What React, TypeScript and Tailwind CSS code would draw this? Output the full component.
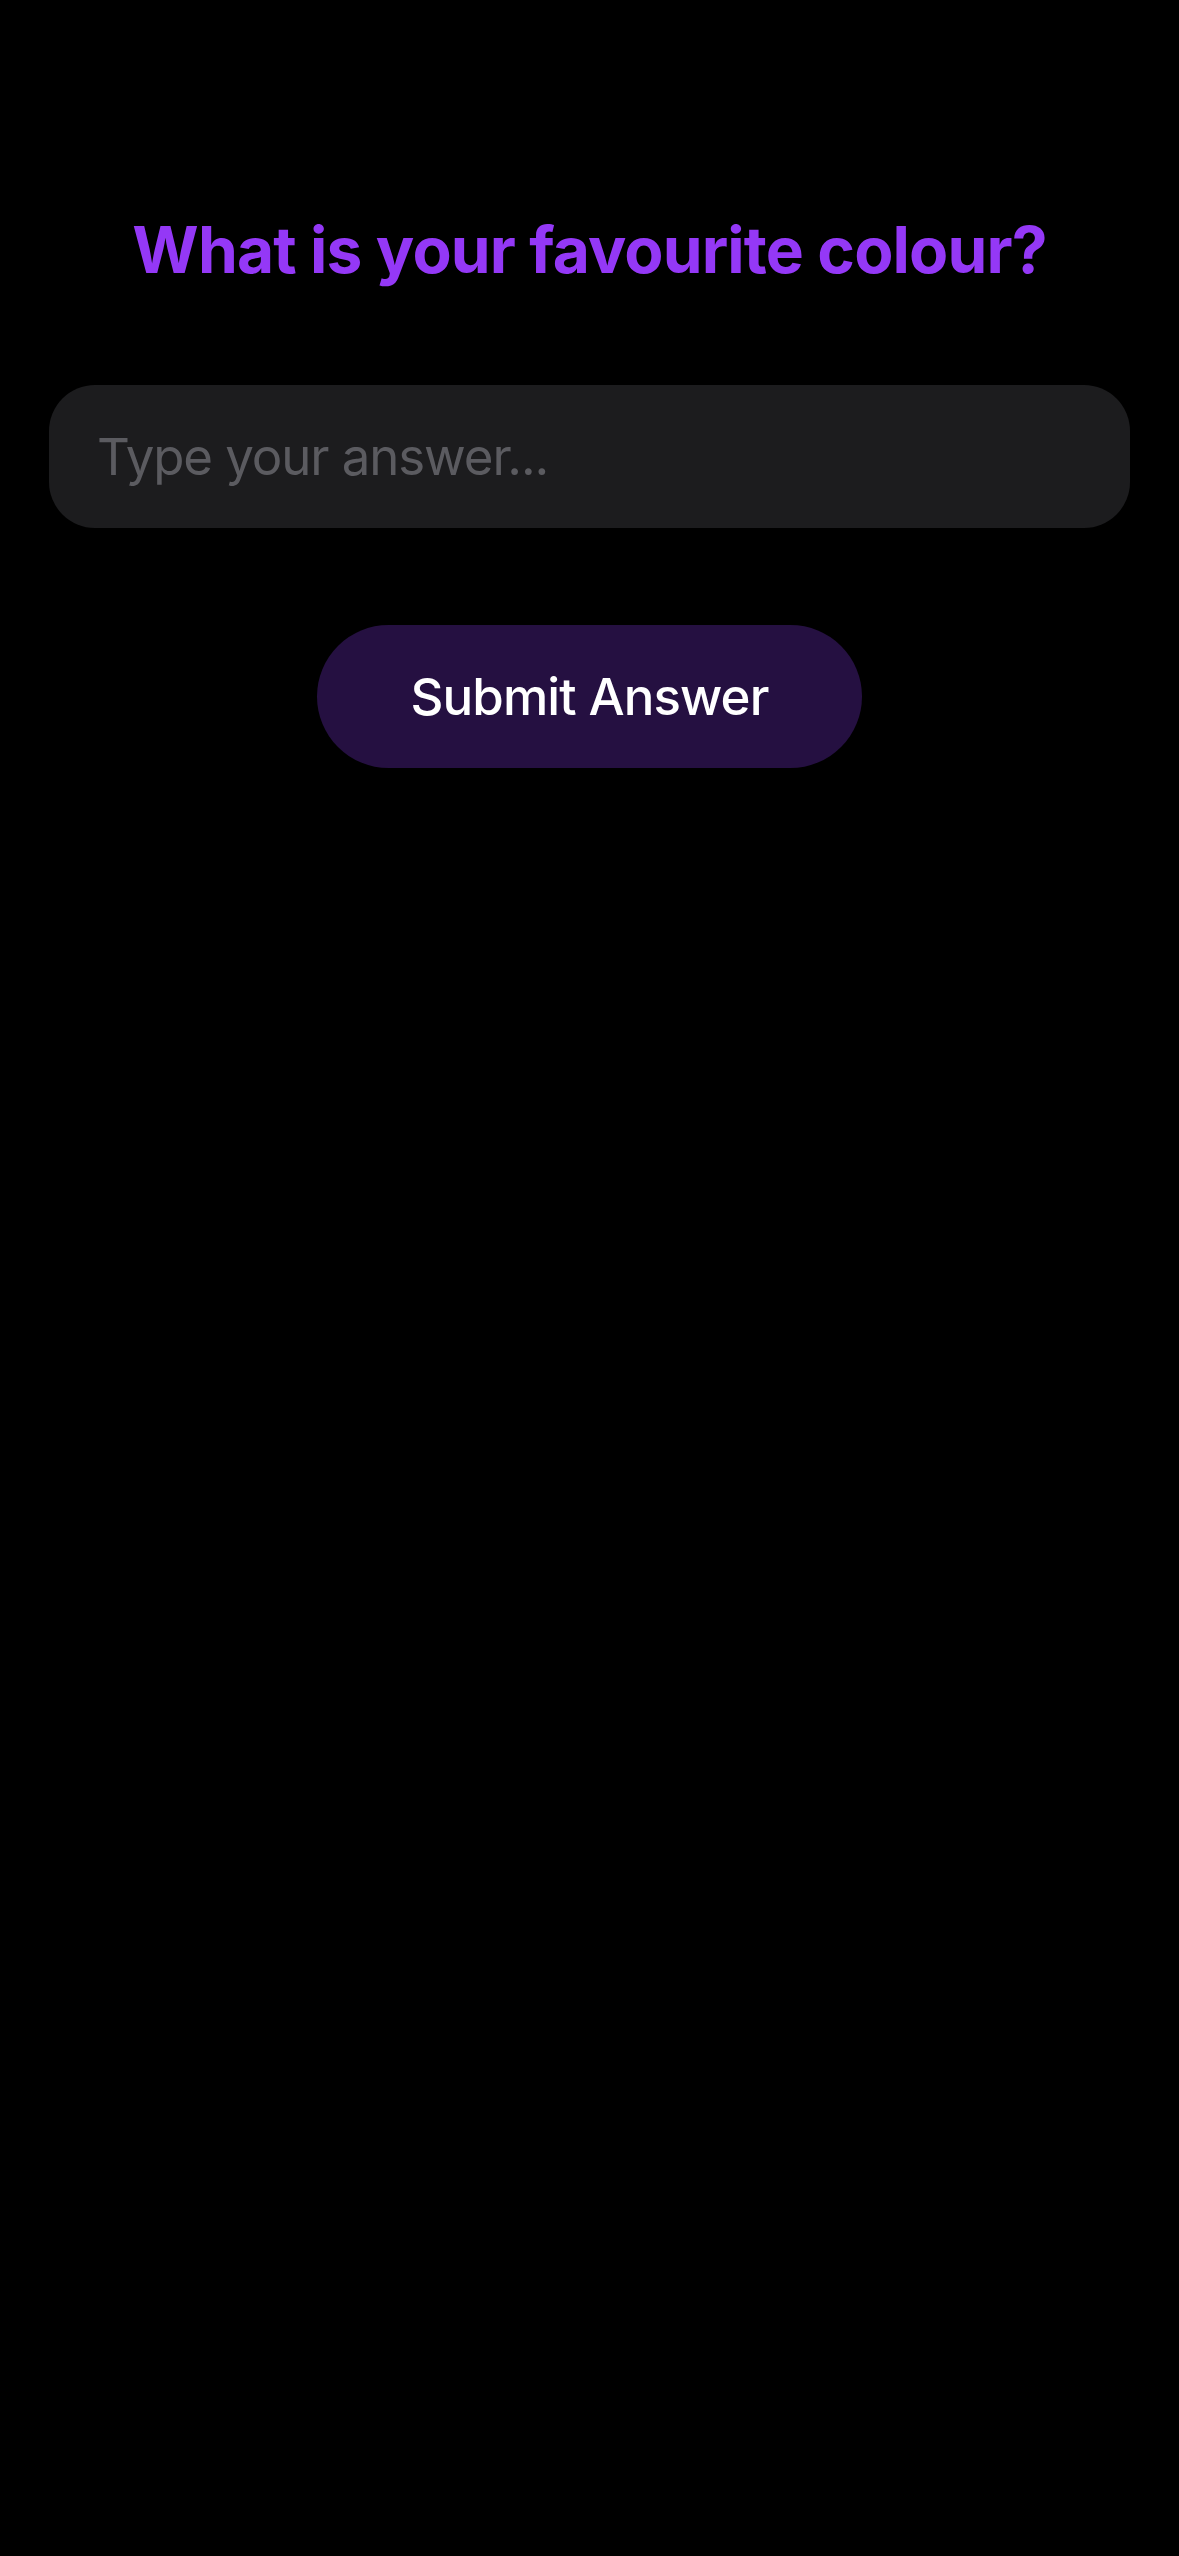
import React, { useState } from 'react';

const App = () => {
    const [answer, setAnswer] = useState('');

    return (
        <div className="min-h-screen w-full bg-black px-[49px] pt-[211px] font-['Inter','Noto_Sans',sans-serif]">
            <h1 className="text-center text-[64px] leading-[77px] font-bold tracking-[-0.85px] text-[#9438f6]">
                What is your favourite colour?
            </h1>

            <input
                type="text"
                value={answer}
                onChange={e => setAnswer(e.target.value)}
                placeholder="Type your answer..."
                className="mt-[97px] block w-full h-[143px] rounded-[46px] bg-[#1c1c1e] px-[48px] text-[51px] tracking-[-1.1px] text-white placeholder:text-[#5b5b60] outline-none"
            />

            <div className="mt-[97px] flex justify-center">
                <button
                    type="button"
                    className="h-[143px] w-[545px] rounded-full bg-[#251041] pt-[2px] text-[51px] font-medium tracking-[-0.9px] text-white"
                >
                    Submit Answer
                </button>
            </div>
        </div>
    );
};

export default App;
